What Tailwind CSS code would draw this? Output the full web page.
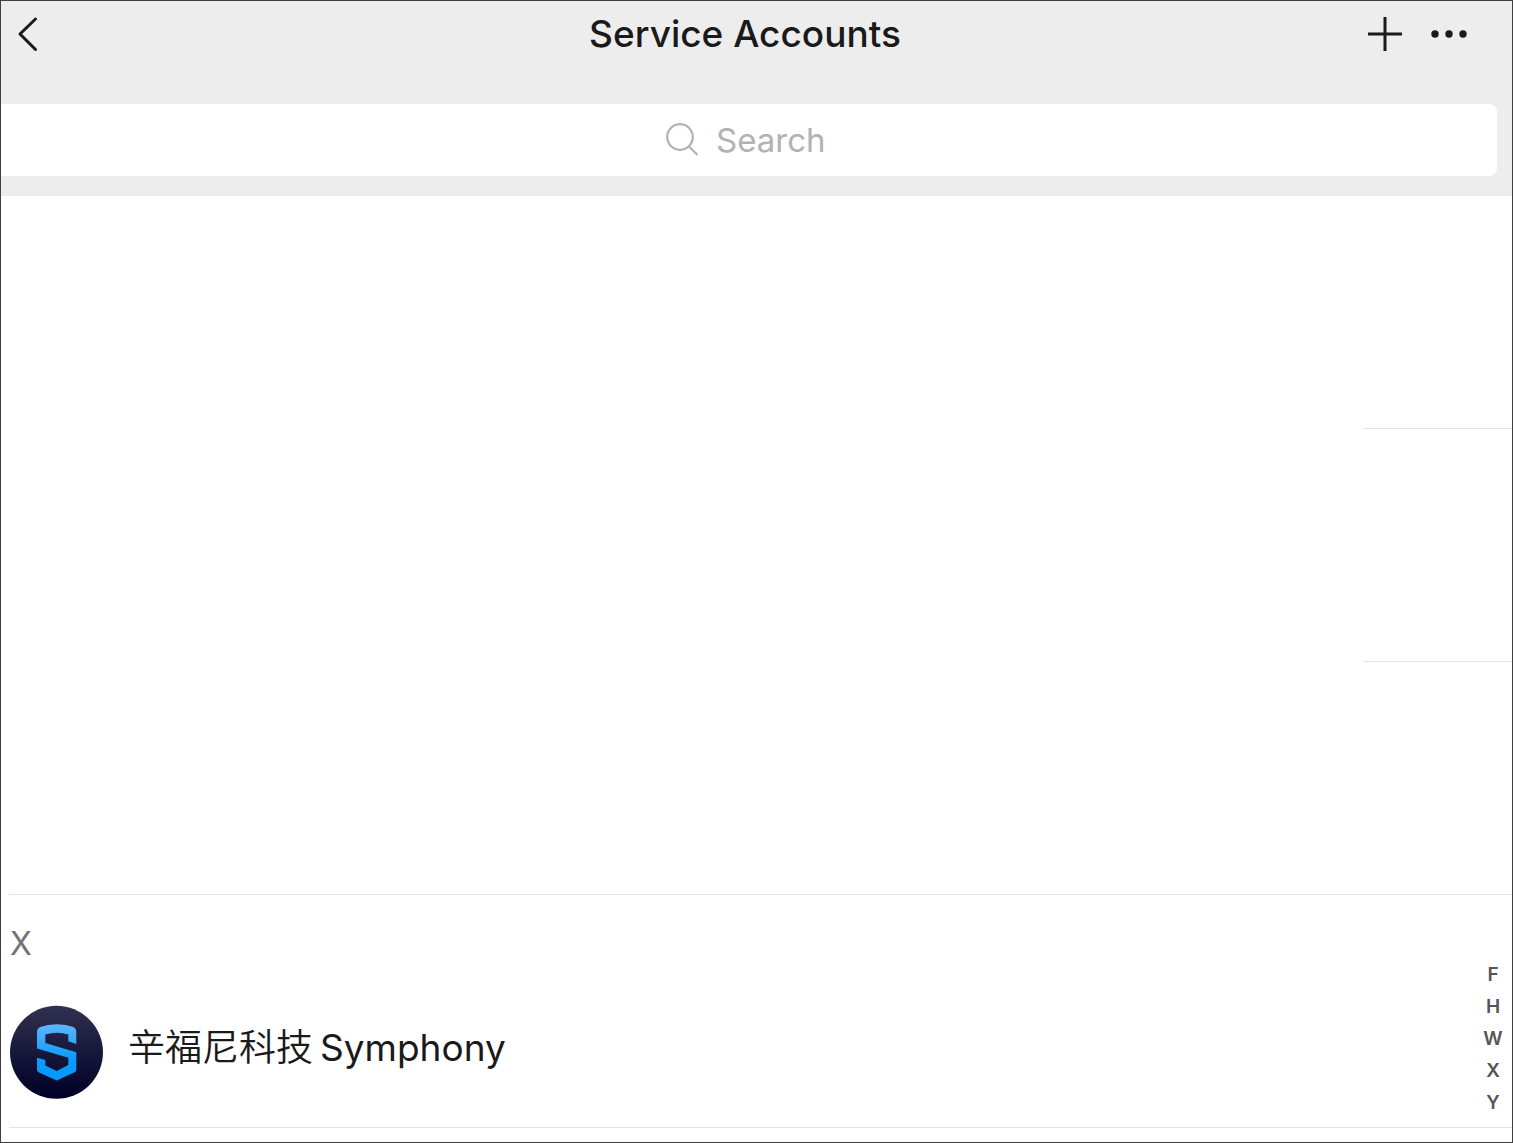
<!DOCTYPE html>
<html lang="en">
<head>
  <meta charset="UTF-8">
  <title>Service Accounts</title>
  <meta name="viewport" content="width=device-width, initial-scale=1.0">
  <script src="https://cdn.jsdelivr.net/npm/@tailwindcss/browser@4"></script>
</head>
<body class="bg-white text-[#1a1a1a] font-['Inter','Noto_Sans_CJK_SC',sans-serif]">
  <div id="page" class="flex flex-col min-h-screen border border-[#3f3f41]">
    <header class="bg-[#ededed] pb-5">
      <div class="h-[66px] pl-4 pr-[45px] flex items-center">
        <div class="w-[106px] flex">
          <button type="button" aria-label="Back" class="w-6 h-10 flex items-center">
            <svg class="w-6 h-10" viewBox="0 0 24 40" fill="none" stroke="#1a1a1a" stroke-width="3" stroke-linecap="round" stroke-linejoin="round">
              <path d="M18.500 5L3 20l15.500 15.500"/>
            </svg>
          </button>
        </div>
        <h1 class="flex-1 text-center text-[37px] font-medium whitespace-nowrap">Service Accounts</h1>
        <div class="flex items-center gap-7">
          <button type="button" aria-label="Add" class="w-9 h-9">
            <svg class="w-9 h-9" viewBox="0 0 36 36" fill="none" stroke="#1a1a1a" stroke-width="3">
              <path d="M1 18h34M18 1v34"/>
            </svg>
          </button>
          <button type="button" aria-label="More" class="w-9 h-9">
            <svg class="w-9 h-9" viewBox="0 0 36 36" fill="#1a1a1a">
              <circle cx="4" cy="18" r="3.700"/>
              <circle cx="18" cy="18" r="3.700"/>
              <circle cx="32" cy="18" r="3.700"/>
            </svg>
          </button>
        </div>
      </div>
      <label for="search" class="mt-[37px] mr-[15px] pr-[10px] h-[72px] flex items-center justify-center gap-4 bg-white rounded-r-lg">
        <svg class="w-9 h-9" viewBox="0 0 36 36" fill="none" stroke="#b2b2b2" stroke-width="2.200">
          <circle cx="16" cy="15" r="12.800"/>
          <path d="M25 24.500l8.500 8.500"/>
        </svg>
        <input id="search" type="text" placeholder="Search" aria-label="Search" class="w-[108px] pt-[2px] text-[33px] outline-none placeholder:text-[#b2b2b2]">
      </label>
    </header>

    <main class="relative flex-1">
      <ul>
        <li class="h-[233px] flex items-end justify-end"><div class="w-[148px] border-b border-[#e3e3e3]"></div></li>
        <li class="h-[233px] flex items-end justify-end"><div class="w-[148px] border-b border-[#e3e3e3]"></div></li>
        <li class="h-[233px] ml-2 border-b border-[#e3e3e3]"></li>
      </ul>

      <section class="ml-2 pl-px border-b border-[#e3e3e3]">
        <h2 class="h-24 pt-[2px] flex items-center text-[32px] text-[#737373]">X</h2>
        <a href="#" class="pt-[14px] pb-7 flex items-center gap-6">
          <svg class="w-[94px] h-[94px]" viewBox="0 0 94 94">
            <defs>
              <linearGradient id="disc" x1="0" y1="0" x2="0" y2="1">
                <stop offset="0" stop-color="#30304f"/>
                <stop offset="1" stop-color="#000028"/>
              </linearGradient>
              <linearGradient id="mark" x1="0" y1="0" x2="0" y2="1">
                <stop offset="0" stop-color="#5eb6ff"/>
                <stop offset=".6" stop-color="#0d9bff"/>
                <stop offset="1" stop-color="#0098ff"/>
              </linearGradient>
            </defs>
            <circle cx="46.500" cy="47.300" r="46.500" fill="url(#disc)"/>
            <path fill="url(#mark)" d="M66.300 39V27Q66.300 23.500 63.500 22Q56 19.300 46.700 19.300Q37.500 19.300 30 22Q27 23.500 27 27V43.500L58.300 52.700V60L46.700 66L35.300 60.500V55L27 52.700V64.500Q27 66.300 28.500 67.200L46.700 75.500L64.800 67.200Q66.300 66.300 66.300 64.500V47.200L35.300 38V29.500Q46.700 26 58.300 29.500V36.300Z"/>
          </svg>
          <span class="pb-2 flex items-center gap-[7px] text-[37px] whitespace-nowrap">
            <span class="font-[350]">辛福尼科技</span>
            <span>Symphony</span>
          </span>
        </a>
      </section>

      <nav aria-label="Index" class="absolute right-1 bottom-[23px] w-[30px] flex flex-col text-center text-[19px] leading-8 font-semibold text-[#555]">
        <a href="#">F</a>
        <a href="#">H</a>
        <a href="#">W</a>
        <a href="#">X</a>
        <a href="#">Y</a>
      </nav>
    </main>
  </div>
</body>
</html>
